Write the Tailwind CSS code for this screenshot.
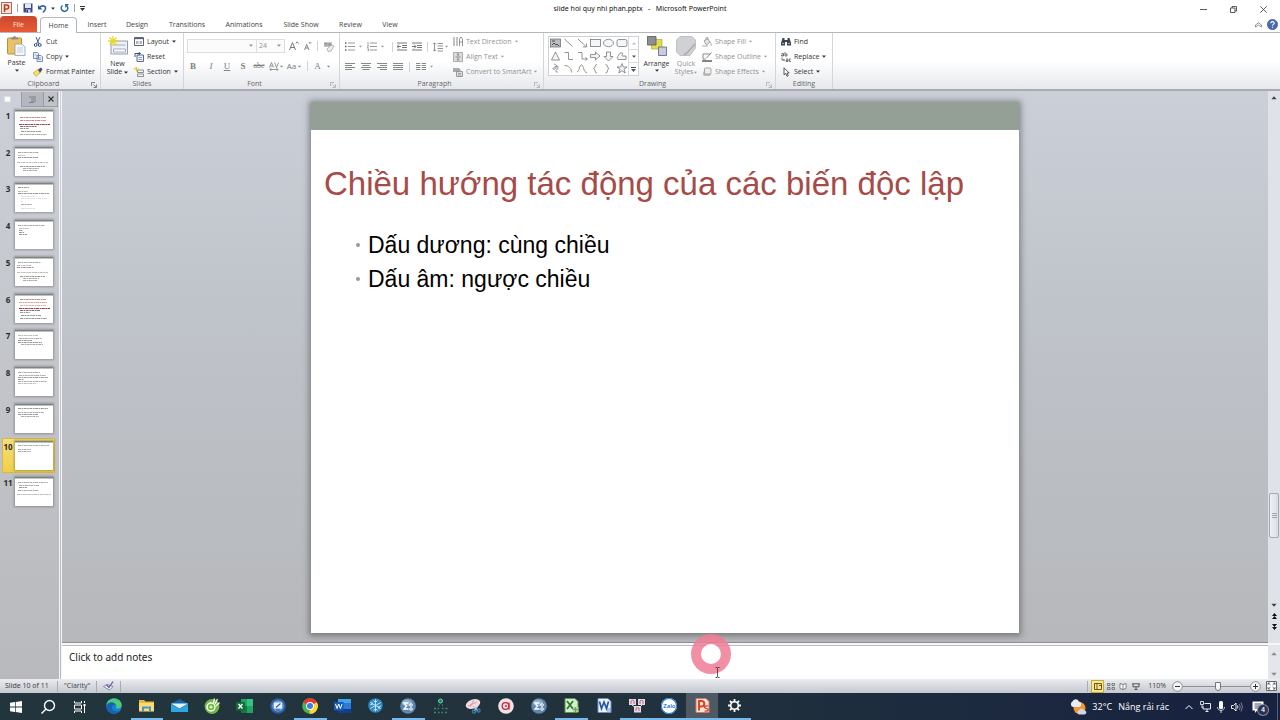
<!DOCTYPE html>
<html lang="vi">
<head>
  <meta charset="UTF-8" />
  <meta name="viewport" content="width=device-width, initial-scale=1" />
  <title>slide hoi quy nhi phan.pptx - Microsoft PowerPoint</title>
  <script src="https://cdn.jsdelivr.net/npm/@tailwindcss/browser@4"></script>
</head>
<body class="h-screen min-h-[600px] flex flex-col overflow-hidden bg-white font-['Open_Sans','Noto_Sans',sans-serif] text-[7px] leading-[10px] text-[#333]">

  <!-- Shared symbols -->
  <svg class="hidden">
    <symbol id="caret" viewBox="0 0 4 3"><path d="M0 .5h4L2 2.800z" fill="currentColor"/></symbol>
    <symbol id="launcher" viewBox="0 0 6 6"><path d="M.5 4V.5H4M2.500 2.500 5 5M5.500 2.500v3h-3" fill="none" stroke="currentColor" stroke-width=".8"/></symbol>
    <symbol id="sigma" viewBox="0 0 16 16">
      <circle cx="8" cy="8" r="7.800" fill="#5f86ad"/><ellipse cx="7" cy="5" rx="5" ry="3.500" fill="#9dbbd6" opacity=".8"/>
      <path d="M8.500 5H4l2.500 3L4 11h4.500" fill="none" stroke="#fff" stroke-width="1.300"/><circle cx="11" cy="7" r="1.300" fill="none" stroke="#fff"/><circle cx="11" cy="11" r="1.300" fill="none" stroke="#fff"/>
    </symbol>
  </svg>

  <!-- Title bar -->
  <header class="h-4 shrink-0 flex items-center relative">
    <div class="flex items-center gap-[5px] pl-px">
      <svg class="w-[11px] h-3" viewBox="0 0 11 12"><rect x=".5" y=".5" width="10" height="11" fill="#fbe9e2" stroke="#b06a55"/><path d="M3.500 10V3h2.200a2 2 0 0 1 0 4H3.500" fill="none" stroke="#c43e1c" stroke-width="1.600"/></svg>
      <span class="w-px h-2 bg-gray-400"></span>
      <button aria-label="Save"><svg class="w-[10px] h-[10px]" viewBox="0 0 10 10"><path d="M.5.500h9v9h-9z" fill="#3d4a86"/><path d="M2 .500h6V5H2z" fill="#e4e9f7"/><path d="M3 6.500h4.500v3H3z" fill="#cdd5ec"/><path d="M3.500 7h1.500v2.500H3.500z" fill="#2b3565"/></svg></button>
      <button aria-label="Undo" class="flex items-center gap-1"><svg class="w-[9px] h-[9px]" viewBox="0 0 9 9"><path d="M1.500 3.500C4 1 8 1.500 7.500 4.500 7.300 6.500 5.500 7.500 5 8.500" fill="none" stroke="#2f5d9f" stroke-width="1.600"/><path d="M0 1v4.500h4.500z" fill="#2f5d9f"/></svg><svg class="w-1 h-[3px]"><use href="#caret"/></svg></button>
      <button aria-label="Redo"><svg class="w-[9px] h-[9px]" viewBox="0 0 9 9"><path d="M2.500 1.500A3.300 3.300 0 1 0 6.500 1.500" fill="none" stroke="#2f6aa8" stroke-width="1.500"/><path d="M5 0h4L5.500 4z" fill="#2f6aa8"/></svg></button>
      <span class="w-px h-2 bg-gray-400"></span>
      <button aria-label="Customize toolbar"><svg class="w-[5px] h-[5px]" viewBox="0 0 5 5"><path d="M0 0h5v1H0zM0 2h5L2.500 5z" fill="#333"/></svg></button>
    </div>
    <div class="absolute inset-0 flex items-center justify-center pt-px font-['Noto_Sans',sans-serif] text-[#111] whitespace-pre pointer-events-none">slide hoi quy nhi phan.pptx   -   Microsoft PowerPoint</div>
    <div class="ml-auto flex items-center gap-[23px] pr-[13px] pt-[2px]">
      <button aria-label="Minimize"><svg class="w-[7px] h-[7px]" viewBox="0 0 7 7"><path d="M0 3.500h7" stroke="#333" stroke-width=".8"/></svg></button>
      <button aria-label="Restore"><svg class="w-[7px] h-[7px]" viewBox="0 0 7 7"><path d="M.5 2h4.500v4.500H.5zM2 2V.500h4.500V5H5" fill="none" stroke="#333" stroke-width=".8"/></svg></button>
      <button aria-label="Close"><svg class="w-[7px] h-[7px]" viewBox="0 0 7 7"><path d="M.3.300l6.400 6.400M6.700.300.300 6.700" stroke="#333" stroke-width=".8"/></svg></button>
    </div>
  </header>

  <!-- Ribbon tabs -->
  <nav class="h-[17px] shrink-0 flex items-end border-b border-[#b4b7bd] text-[#444] *:pt-px">
    <button class="w-[37px] h-4 rounded-t-sm bg-linear-to-b from-[#c9492f] to-[#ea5a33] text-[#ffe6dc]">File</button>
    <button class="w-[37px] h-4 ml-[3px] -mb-px rounded-t-sm border border-b-0 border-[#b4b7bd] bg-white">Home</button>
    <button class="w-10 h-4">Insert</button>
    <button class="w-10 h-4">Design</button>
    <button class="w-[60px] h-4">Transitions</button>
    <button class="w-[54px] h-4">Animations</button>
    <button class="w-[60px] h-4">Slide Show</button>
    <button class="w-[39px] h-4">Review</button>
    <button class="w-10 h-4">View</button>
    <div class="ml-auto flex items-center gap-[5px] pr-[2px] h-4">
      <button aria-label="Minimize ribbon"><svg class="w-[7px] h-[6px]" viewBox="0 0 7 6"><path d="M.5 3 3.500.800 6.500 3v2L3.500 3 .5 5z" fill="#fff" stroke="#666" stroke-width=".7"/></svg></button>
      <button aria-label="Help"><svg class="w-[11px] h-[11px]" viewBox="0 0 11 11"><circle cx="5.500" cy="5.500" r="5.200" fill="#4a6ab0" stroke="#37518d" stroke-width=".5"/><path d="M3.800 4.200c0-2.200 3.500-2.100 3.400 0C7.200 5.400 5.500 5.500 5.500 6.800M5.500 7.800v1" fill="none" stroke="#fff" stroke-width="1.100"/></svg></button>
    </div>
  </nav>

  <!-- Ribbon -->
  <div class="h-[58px] shrink-0 flex bg-linear-to-b from-white from-50% to-[#e6e8ec] border-b-2 border-[#a9abb0] pl-px whitespace-nowrap">

    <section class="w-[100px] flex flex-col border-r border-[#d4d6da]">
      <div class="h-[46px] flex pt-px">
        <button class="w-[31px] flex flex-col items-center pt-[2px]">
          <svg class="w-[19px] h-5" viewBox="0 0 19 20"><rect x=".5" y="2" width="14" height="16" rx="1" fill="#eac263" stroke="#b98f3c"/><path d="M4 3.500V1.500h2a1.500 1.500 0 0 1 3 0h2v2z" fill="#8c8c90"/><path d="M8 8h7l3 3v8.500H8z" fill="#f5f7fb" stroke="#8491b0" stroke-width=".7"/><path d="M10 12h6M10 14h6M10 16h6" stroke="#a9b4cf" stroke-width=".6"/></svg>
          <span class="mt-[2px]">Paste</span><svg class="w-1 h-[3px] mt-px"><use href="#caret"/></svg>
        </button>
        <div class="flex flex-col pl-px">
          <button class="h-[15px] flex items-center gap-[3px]"><svg class="w-[10px] h-[10px]" viewBox="0 0 10 10"><path d="M3 0l3 7M7 0 3.500 7" stroke="#4b5b7b"/><circle cx="2.700" cy="8" r="1.400" fill="none" stroke="#2f4d86"/><circle cx="6.800" cy="8" r="1.400" fill="none" stroke="#2f4d86"/></svg>Cut</button>
          <button class="h-[15px] flex items-center gap-[3px]"><svg class="w-[10px] h-[10px]" viewBox="0 0 10 10"><path d="M.5.500h4l1 1v5h-5zM4 3.500h4l1.500 1.500v4.500H4z" fill="#e9effb" stroke="#5877ac" stroke-width=".8"/><path d="M1.500 3h2M5 6h3M5 7.500h3" stroke="#5877ac" stroke-width=".6"/></svg>Copy<svg class="w-1 h-[3px]"><use href="#caret"/></svg></button>
          <button class="h-[15px] flex items-center gap-[3px]"><svg class="w-[10px] h-[10px]" viewBox="0 0 10 10"><path d="M0 6 5 2.500 7 6 3 9.500z" fill="#f3df62" stroke="#a48e2c" stroke-width=".5"/><path d="M5 2.500 8 .500l1.500 2L7 6z" fill="#48506a"/></svg>Format Painter</button>
        </div>
      </div>
      <footer class="flex-1 flex items-center justify-center relative pr-[14px] text-[#666]">Clipboard<button aria-label="Clipboard options" class="absolute right-[3px] top-[3px]"><svg class="w-[6px] h-[6px]"><use href="#launcher"/></svg></button></footer>
    </section>

    <section class="w-[83px] flex flex-col border-r border-[#d4d6da]">
      <div class="h-[46px] flex pt-px">
        <button class="w-[33px] flex flex-col items-center pt-[2px]">
          <svg class="w-5 h-5" viewBox="0 0 20 20"><rect x="3" y="5" width="16.500" height="13" fill="#eef1f6" stroke="#7b8799" stroke-width=".8"/><path d="M5.500 9h12M5.500 13h12v3h-12z" fill="#fff" stroke="#9aa5b8" stroke-width=".9"/><path d="M5 0v10M0 5h10M1.500 1.500l7 7M8.500 1.500l-7 7" stroke="#e6d928" stroke-width="1.300"/></svg>
          <span class="mt-[3px] leading-[9px]">New</span><span class="flex items-center gap-[2px] leading-[8px]">Slide <svg class="w-1 h-[3px]"><use href="#caret"/></svg></span>
        </button>
        <div class="flex flex-col">
          <button class="h-[15px] flex items-center gap-[3px]"><svg class="w-[10px] h-[9px]" viewBox="0 0 10 9"><path d="M.5.500h9v8h-9z" fill="#fff" stroke="#5d6470"/><path d="M1 1.500h8" stroke="#5d6470" stroke-width="1.300"/><path d="M2 4h2.500v3H2zM5.500 4H8v3H5.500z" fill="#a7b3c9"/></svg>Layout<svg class="w-1 h-[3px]"><use href="#caret"/></svg></button>
          <button class="h-[15px] flex items-center gap-[3px]"><svg class="w-[10px] h-[10px]" viewBox="0 0 10 10"><path d="M3 3h6.500v6.500H3z" fill="#eef2fa" stroke="#5d6b88"/><path d="M1 5V1.500h5M4.500 0 6.500 1.500l-2 1.500" fill="none" stroke="#2e4f95"/><path d="M4.500 5.500H8M4.500 7.500H8" stroke="#7f8ca8" stroke-width=".8"/></svg>Reset</button>
          <button class="h-[15px] flex items-center gap-[3px]"><svg class="w-[10px] h-[10px]" viewBox="0 0 10 10"><path d="M3.500 3h6v2.500h-6zM3.500 7h6v2.500h-6z" fill="#f5f6f8" stroke="#70767f" stroke-width=".8"/><path d="M0 2h5M2.500 0v4.500M.7.300l3.600 3.600" stroke="#dccb24"/></svg>Section<svg class="w-1 h-[3px]"><use href="#caret"/></svg></button>
        </div>
      </div>
      <footer class="flex-1 flex items-center justify-center text-[#666]">Slides</footer>
    </section>

    <section class="w-[156px] flex flex-col border-r border-[#d4d6da] text-[#929292]">
      <div class="h-[46px] flex flex-col pt-[5px] pl-[3px]">
        <div class="flex items-center h-[16px]">
          <span class="relative"><select aria-label="Font" class="block appearance-none w-[70px] h-[14px] border border-[#dcdde0] bg-[#fbfbfb]"><option></option></select><svg class="w-1 h-[3px] absolute right-1 top-[5px]"><use href="#caret"/></svg></span>
          <span class="relative"><select aria-label="Font size" class="block appearance-none w-[28px] h-[14px] border border-l-0 border-[#dcdde0] bg-[#fbfbfb] pl-[2px] leading-[12px]"><option>24</option></select><svg class="w-1 h-[3px] absolute right-1 top-[5px]"><use href="#caret"/></svg></span>
          <button aria-label="Grow font" class="ml-1"><svg class="w-[10px] h-[10px]" viewBox="0 0 10 10"><path d="M.5 9 3.500 1.500 6.500 9M1.500 6.500h4M7 2.500 8.200.800 9.500 2.500" fill="none" stroke="#777"/></svg></button>
          <button aria-label="Shrink font" class="ml-[5px]"><svg class="w-[8px] h-[10px]" viewBox="0 0 8 10"><path d="M.5 9 2.700 3.500 5 9M1.300 7h2.800M5 1l1 1.500L7.200 1" fill="none" stroke="#777" stroke-width=".9"/></svg></button>
          <span class="w-px h-[10px] ml-[5px] bg-[#d0d2d6]"></span>
          <button aria-label="Clear formatting" class="ml-[5px]"><svg class="w-[11px] h-[11px]" viewBox="0 0 11 11"><path d="M1 1h8v5H1z" fill="#c9c9cb"/><path d="M2 5V2.500h2V5M6 2v3h2V3H6" fill="none" stroke="#777" stroke-width=".7"/><path d="M4 8l4-4 3 1-3 5-3 .500z" fill="#eee" stroke="#999" stroke-width=".7"/></svg></button>
        </div>
        <div class="flex items-center h-6 font-['Liberation_Serif',serif] text-[9px] text-[#808080]">
          <button class="w-4 pr-[4px] font-bold text-center">B</button>
          <button class="w-4 italic">I</button>
          <button class="w-4 underline">U</button>
          <button class="w-4 font-bold">S</button>
          <button class="w-4 text-[8px] line-through">abc</button>
          <button class="w-[17px] flex items-center gap-px justify-center text-[7px]"><svg class="w-[10px] h-[9px]" viewBox="0 0 10 9"><path d="M.5 5.500 2.500.500l2 5M1.200 4h2.600M5.500.500l2 5 2-5M1 7.500h8M2.500 6.300.800 7.500l1.700 1.200M7.500 6.300l1.700 1.200-1.700 1.200" fill="none" stroke="currentColor" stroke-width=".8"/></svg><svg class="w-[3px] h-[3px]"><use href="#caret"/></svg></button>
          <button class="w-5 flex items-center gap-[2px] justify-center font-['Open_Sans',sans-serif] text-[8px]">Aa<svg class="w-[3px] h-[3px]"><use href="#caret"/></svg></button>
          <span class="w-px h-[10px] ml-[3px] bg-[#d0d2d6]"></span>
          <button class="w-[28px] flex items-center gap-[6px] justify-center">A<svg class="w-[3px] h-[3px]"><use href="#caret"/></svg></button>
        </div>
      </div>
      <footer class="flex-1 flex items-center justify-center relative pr-[14px] text-[#666]">Font<button aria-label="Font options" class="absolute right-[3px] top-[3px] text-[#aaa]"><svg class="w-[6px] h-[6px]"><use href="#launcher"/></svg></button></footer>
    </section>

    <section class="w-[204px] flex flex-col border-r border-[#d4d6da] text-[#929292]">
      <div class="h-[46px] flex pt-px">
        <div class="w-[113px] flex flex-col pt-1 pl-[5px]">
          <div class="h-[17px] flex items-center">
            <button aria-label="Bullets" class="flex items-center gap-1"><svg class="w-[10px] h-[9px]" viewBox="0 0 10 9"><path d="M0 1h1.500M0 4.500h1.500M0 8h1.500" stroke="#666" stroke-width="1.400"/><path d="M3 1h7M3 4.500h7M3 8h7" stroke="#999"/></svg><svg class="w-[3px] h-[3px]"><use href="#caret"/></svg></button>
            <button aria-label="Numbering" class="flex items-center gap-1 ml-[5px]"><svg class="w-[10px] h-[9px]" viewBox="0 0 10 9"><path d="M1 0v2.500M.3 3.500h1.200L.3 5.500h1.200M.3 6.800h1.200v2H.3" fill="none" stroke="#777" stroke-width=".7"/><path d="M3 1h7M3 4.500h7M3 8h7" stroke="#999"/></svg><svg class="w-[3px] h-[3px]"><use href="#caret"/></svg></button>
            <span class="w-px h-[10px] mx-[4px] ml-[8px] bg-[#d0d2d6]"></span>
            <button aria-label="Decrease indent"><svg class="w-[10px] h-[9px]" viewBox="0 0 10 9"><path d="M0 1h10M5 3.500h5M5 5.500h5M0 8h10M4 4.500H0M2 2.500l-2 2 2 2" fill="none" stroke="#777"/></svg></button>
            <button aria-label="Increase indent" class="ml-[5px]"><svg class="w-[10px] h-[9px]" viewBox="0 0 10 9"><path d="M0 1h10M5 3.500h5M5 5.500h5M0 8h10M0 4.500h4M2 2.500l2 2-2 2" fill="none" stroke="#777"/></svg></button>
            <span class="w-px h-[10px] mx-[5px] bg-[#d0d2d6]"></span>
            <button aria-label="Line spacing" class="flex items-center gap-[2px]"><svg class="w-[10px] h-[10px]" viewBox="0 0 10 10"><path d="M4.500 1.500H10M4.500 4H10M4.500 6.500H10M4.500 9H10M1.500 1v8M0 2.500 1.500.800 3 2.500M0 7.500l1.500 1.700L3 7.500" fill="none" stroke="#888" stroke-width=".9"/></svg><svg class="w-[3px] h-[3px]"><use href="#caret"/></svg></button>
          </div>
          <div class="h-[23px] flex items-center gap-[6px]">
            <button aria-label="Align left"><svg class="w-[10px] h-[9px]" viewBox="0 0 10 9"><path d="M0 1.500h10M0 3.500h7M0 5.500h10M0 7.500h7" stroke="#888"/></svg></button>
            <button aria-label="Center"><svg class="w-[10px] h-[9px]" viewBox="0 0 10 9"><path d="M0 1.500h10M1.500 3.500h7M0 5.500h10M1.500 7.500h7" stroke="#888"/></svg></button>
            <button aria-label="Align right"><svg class="w-[10px] h-[9px]" viewBox="0 0 10 9"><path d="M0 1.500h10M3 3.500h7M0 5.500h10M3 7.500h7" stroke="#888"/></svg></button>
            <button aria-label="Justify"><svg class="w-[10px] h-[9px]" viewBox="0 0 10 9"><path d="M0 1.500h10M0 3.500h10M0 5.500h10M0 7.500h10" stroke="#888"/></svg></button>
            <span class="w-px h-[10px] bg-[#d0d2d6]"></span>
            <button aria-label="Columns" class="flex items-center gap-1"><svg class="w-[10px] h-[9px]" viewBox="0 0 10 9"><path d="M0 1.500h4.300M0 3.500h4.300M0 5.500h4.300M0 7.500h4.300M5.700 1.500H10M5.700 3.500H10M5.700 5.500H10M5.700 7.500H10" stroke="#888"/></svg><svg class="w-[3px] h-[3px]"><use href="#caret"/></svg></button>
          </div>
        </div>
        <div class="flex flex-col">
          <button class="h-[15px] flex items-center gap-[3px]"><svg class="w-[10px] h-[11px]" viewBox="0 0 10 11"><path d="M1 1v9M4 1v9" stroke="#888"/><path d="M6.500 10V3L8 1l1.500 2v7M6.500 6h3" fill="none" stroke="#888" stroke-width=".9"/></svg>Text Direction<svg class="w-[3px] h-[3px]"><use href="#caret"/></svg></button>
          <button class="h-[15px] flex items-center gap-[3px]"><svg class="w-[10px] h-[10px]" viewBox="0 0 10 10"><path d="M.5.500h9v9h-9z" fill="#ddd" stroke="#aaa"/><path d="M2.500 5h5M5 1v2.500M5 6.500V9M4 2.500l1 1 1-1M4 7.500l1-1 1 1" fill="none" stroke="#777" stroke-width=".8"/></svg>Align Text<svg class="w-[3px] h-[3px]"><use href="#caret"/></svg></button>
          <button class="h-[15px] flex items-center gap-[3px]"><svg class="w-[10px] h-[10px]" viewBox="0 0 10 10"><path d="M0 1h6l2 2-2 2H0z" fill="#aaa"/><path d="M3.500 4.500h6v5h-6z" fill="#ddd" stroke="#888" stroke-width=".8"/><path d="M5 6.500h3M5 8h3" stroke="#888" stroke-width=".7"/></svg>Convert to SmartArt<svg class="w-[3px] h-[3px]"><use href="#caret"/></svg></button>
        </div>
      </div>
      <footer class="flex-1 flex items-center justify-center relative pr-[14px] text-[#666]">Paragraph<button aria-label="Paragraph options" class="absolute right-[3px] top-[3px] text-[#aaa]"><svg class="w-[6px] h-[6px]"><use href="#launcher"/></svg></button></footer>
    </section>

    <section class="w-[232px] flex flex-col border-r border-[#d4d6da]">
      <div class="h-[46px] flex pt-px">
        <div class="w-[91px] h-10 mt-[2px] ml-1 flex border border-[#cfd1d5] bg-white text-[#555]">
          <svg class="w-[79px] h-[38px]" viewBox="0 0 79 38" fill="none" stroke="#666" stroke-width=".7">
            <rect x="1.500" y="2" width="10" height="8" fill="#b9bcc2"/><path d="M3 4h3M3 8l2-2 2 2 1-1 2 2" stroke="#222"/>
            <path d="M15.500 2l8 7.500M29 2l8 7.500M37.500 6.500V10H34"/>
            <rect x="41.500" y="2.500" width="10" height="7" fill="#f4f6fa"/><ellipse cx="59.500" cy="6" rx="5" ry="3.700" fill="#f4f6fa"/><rect x="68" y="2.500" width="10" height="7" rx="1.800" fill="#f4f6fa"/>
            <path d="M6.500 15 2.500 23h8z" fill="#f4f6fa"/><path d="M15.500 15.500h4v7h4.500M29 15.500h4v6.500h5M36.500 20.500l2 1.500-2 1.500"/>
            <path d="M41.500 17.500h5V15l4.500 4-4.500 4v-2.500h-5z" fill="#f4f6fa"/><path d="M57.500 15h4v4.500H64L59.500 24 55 19.500h2.500z" fill="#f4f6fa"/>
            <path d="M69 22.500c-2-2 .500-3.500 1-5 1-2.500 4-2 4-.500-1 1-2 2 0 2h3v3.500z" fill="#f4f6fa"/>
            <path d="M5 27c3 1 3 2 1 3s-3 2-1 2.500c3-2.500 5-2 3 0s-1 3 1 2.500M6 30c2-1 4-1 3 .500"/><path d="M15.500 28.500c4 0 7 3 7 7M28 35c3-1 2-7 4.500-7S34 35.500 38 35.500"/>
            <path d="M48 27.500c-3 0-1 3.500-3.500 4 2.500.500.500 4.500 3.500 4.500M56.500 27.500c3 0 1 3.500 3.500 4-2.500.500-.5 4.500-3.500 4.500"/>
            <path d="M73 26.500l1.300 3.500h3.700l-3 2.200 1.200 3.800-3.200-2.300-3.200 2.300 1.200-3.800-3-2.200h3.700z" fill="#f4f6fa"/>
          </svg>
          <div class="flex-1 flex flex-col divide-y divide-[#d8dade] border-l border-[#d8dade]">
            <button aria-label="Scroll shapes up" class="flex-1 grid place-items-center text-[#bbb]"><svg class="w-1 h-[3px] rotate-180"><use href="#caret"/></svg></button>
            <button aria-label="Scroll shapes down" class="flex-1 grid place-items-center"><svg class="w-1 h-[3px]"><use href="#caret"/></svg></button>
            <button aria-label="More shapes" class="flex-1 grid place-items-center"><svg class="w-[5px] h-[5px]" viewBox="0 0 5 5"><path d="M0 0h5v1H0zM0 2h5L2.500 5z" fill="#555"/></svg></button>
          </div>
        </div>
        <button class="w-[35px] flex flex-col items-center pt-[2px]">
          <svg class="w-5 h-5" viewBox="0 0 20 20"><path d="M4.500 3.500H15V13H4.500z" fill="#e3dd4a" stroke="#b0a836" stroke-width=".7"/><path d="M.5.500H9v8.500H.5z" fill="#8e8f92" stroke="#55575c" stroke-width=".8"/><path d="M11.500 11h8v8.500h-8z" fill="#c9cce0" stroke="#5c6080" stroke-width=".8"/></svg>
          <span class="mt-[3px]">Arrange</span><svg class="w-1 h-[3px]"><use href="#caret"/></svg>
        </button>
        <button class="w-6 flex flex-col items-center pt-[2px] text-[#929292]">
          <svg class="w-5 h-5" viewBox="0 0 20 20"><path d="M4 .500h12L19.500 4v8L14 19.500H4L.5 16V4z" fill="#cfd1d4" stroke="#bfc1c5"/><path d="M19 8l-8 9-3 2" fill="none" stroke="#a9abaf" stroke-width="1.600"/></svg>
          <span class="mt-[3px] leading-[9px]">Quick</span><span class="flex items-center gap-px leading-[8px]">Styles <svg class="w-[3px] h-[3px]"><use href="#caret"/></svg></span>
        </button>
        <div class="flex flex-col pl-1 text-[#929292]">
          <button class="h-[15px] flex items-center gap-[3px]"><svg class="w-[10px] h-[10px]" viewBox="0 0 10 10"><path d="M2 4l3.500-2.500L8 5 4.500 8z" fill="#e6e6e6" stroke="#888" stroke-width=".8"/><path d="M4 3V1a1 1 0 0 1 2 0v2M8 5c1 1 1.500 2 1 4M0 9h6" fill="none" stroke="#999" stroke-width=".8"/></svg>Shape Fill<svg class="w-[3px] h-[3px]"><use href="#caret"/></svg></button>
          <button class="h-[15px] flex items-center gap-[3px]"><svg class="w-[10px] h-[10px]" viewBox="0 0 10 10"><path d="M8 2H1v5h3M9.500.500 4.500 6" fill="none" stroke="#888"/><path d="M0 9h10" stroke="#777" stroke-width="1.800"/></svg>Shape Outline<svg class="w-[3px] h-[3px]"><use href="#caret"/></svg></button>
          <button class="h-[15px] flex items-center gap-[3px]"><svg class="w-[10px] h-[10px]" viewBox="0 0 10 10"><rect x="1" y="4" width="8" height="5" rx="2" fill="#bbb"/><rect x="2.500" y="1" width="6.500" height="6" rx="1" fill="#eee" stroke="#999" stroke-width=".8"/></svg>Shape Effects<svg class="w-[3px] h-[3px]"><use href="#caret"/></svg></button>
        </div>
      </div>
      <footer class="flex-1 flex items-center justify-center relative pr-[14px] text-[#666]">Drawing<button aria-label="Drawing options" class="absolute right-[3px] top-[3px] text-[#aaa]"><svg class="w-[6px] h-[6px]"><use href="#launcher"/></svg></button></footer>
    </section>

    <section class="w-[57px] flex flex-col border-r border-[#d4d6da]">
      <div class="h-[46px] flex flex-col pt-px pl-[5px]">
        <button class="h-[15px] flex items-center gap-[3px]"><svg class="w-[10px] h-[9px]" viewBox="0 0 10 9"><path d="M1.500 1h2v2h3V1h2l1.500 5v2.500H6V5H4v3.500H0V6z" fill="#3c4453"/><path d="M1 6.500h2M7 6.500h2" stroke="#aab3c5"/></svg>Find</button>
        <button class="h-[15px] flex items-center gap-[3px]"><svg class="w-[10px] h-[10px]" viewBox="0 0 10 10"><path d="M.5 1.500h2V4h-2V3h2M4 0v4h2V2H4M5 7h2v2.500H5V8.300h2M10 7H8.500v2.500H10M1 5.500V8h2.500M2.500 7l1 1-1 1" fill="none" stroke="#555" stroke-width=".8"/></svg>Replace<svg class="w-1 h-[3px]"><use href="#caret"/></svg></button>
        <button class="h-[15px] flex items-center gap-[3px]"><svg class="w-[10px] h-[10px]" viewBox="0 0 10 10"><path d="M3 .800v7l1.700-1.500L6 9.300l1.200-.6L6 6h2.200z" fill="#fff" stroke="#333" stroke-width=".8"/></svg>Select<svg class="w-1 h-[3px]"><use href="#caret"/></svg></button>
      </div>
      <footer class="flex-1 flex items-center justify-center text-[#666]">Editing</footer>
    </section>
  </div>

  <!-- Work area -->
  <main class="flex-1 min-h-0 flex bg-linear-to-b from-[#cdd0d8] to-[#b7b9bc]">
    <aside class="w-[59px] shrink-0 flex flex-col">
      <div class="h-4 flex pt-px pr-px shrink-0">
        <button aria-label="Slides" class="w-[21px] pl-1"><svg class="w-[7px] h-[7px]" viewBox="0 0 7 7"><rect x=".5" y=".5" width="6" height="5.500" fill="#fff" stroke="#dcdcdc"/></svg></button>
        <button aria-label="Outline" class="w-[23px] grid place-items-center border border-t-0 border-[#9a9ca3] bg-[#b4b7be]"><svg class="w-[7px] h-[7px]" viewBox="0 0 7 7"><path d="M0 1h7M2 3h5M2 5h5M0 6.500h5" stroke="#777b85" stroke-width=".9"/></svg></button>
        <button aria-label="Close pane" class="w-[14px] grid place-items-center border-b border-r border-[#9a9ca3] bg-[#bfc2c9]"><svg class="w-[6px] h-[6px]" viewBox="0 0 6 6"><path d="M.5.500l5 5M5.500.500l-5 5" stroke="#333" stroke-width="1.200"/></svg></button>
      </div>
      <ol id="slideList" class="grid grid-rows-11 h-[404px] pl-[2px] pr-1 font-bold text-[8px] text-[#2c2c2c]"></ol>
    </aside>

    <div class="flex-1 min-w-0 flex flex-col border-l-[3px] border-double border-[#f3f4f7]">
      <div class="flex-1 min-h-0 flex">
        <div class="flex-1 flex justify-center items-start pt-[11px] bg-linear-to-b from-[#cbcfd7] via-[#bfc3ca] via-40% to-[#b6b8bb] border-b border-[#8e9094]">
          <article class="h-[531px] aspect-4/3 min-w-0 bg-white shadow-[0_1px_6px_2px_rgba(60,60,60,0.5)] font-['Liberation_Sans',sans-serif]">
            <div class="h-7 bg-[#94a096]"></div>
            <h1 class="mt-8 pl-[13px] text-[33px] leading-[44px] text-[#a64b47] whitespace-nowrap">Chiều hướng tác động của các biến độc lập</h1>
            <ul class="mt-[22px] pl-[45px] text-[23px] leading-[34px] text-black">
              <li class="flex items-center gap-[8px]"><span class="w-1 h-1 rounded-full bg-[#999]"></span>Dấu dương: cùng chiều</li>
              <li class="flex items-center gap-[8px]"><span class="w-1 h-1 rounded-full bg-[#999]"></span>Dấu âm: ngược chiều</li>
            </ul>
          </article>
        </div>
        <div class="w-3 flex flex-col items-center bg-[#dfe2e8] text-[#444]">
          <button aria-label="Scroll up" class="h-[13px] grid place-items-center"><svg class="w-[6px] h-1 rotate-180"><use href="#caret"/></svg></button>
          <div class="flex-1 w-full flex flex-col justify-end px-px pb-[61px]">
            <div class="h-[45px] rounded-xs border border-[#a3a8b2] bg-linear-to-r from-[#eef1f6] to-[#d9dce3] grid place-items-center"><svg class="w-[5px] h-[5px]" viewBox="0 0 5 5"><path d="M0 .500h5M0 2.500h5M0 4.500h5" stroke="#888" stroke-width=".7"/></svg></div>
          </div>
          <button aria-label="Scroll down" class="h-[11px] grid place-items-center"><svg class="w-[6px] h-1"><use href="#caret"/></svg></button>
          <button aria-label="Previous slide" class="h-[11px] grid place-items-center"><svg class="w-[5px] h-[6px]" viewBox="0 0 5 6"><path d="M0 3 2.500 0 5 3zM0 6l2.500-3L5 6z" fill="#111"/></svg></button>
          <button aria-label="Next slide" class="h-[11px] mb-[11px] grid place-items-center"><svg class="w-[5px] h-[6px]" viewBox="0 0 5 6"><path d="M0 0h5L2.500 3zM0 3h5L2.500 6z" fill="#111"/></svg></button>
        </div>
      </div>

      <!-- Notes -->
      <div class="h-9 shrink-0 relative flex bg-white border-t-2 border-t-[#f7f7f8]">
        <textarea aria-label="Notes" placeholder="Click to add notes" class="flex-1 resize-none border-t border-[#b9bbbf] pl-[7px] pt-1 font-['Noto_Sans',sans-serif] text-[10px] leading-[14px] placeholder:text-[#222] outline-none"></textarea>
        <div class="w-3 flex flex-col justify-between items-center pt-[7px] pb-[3px] bg-[#e4e6eb] text-[#888]">
          <svg class="w-[6px] h-1 rotate-180"><use href="#caret"/></svg>
          <svg class="w-[6px] h-1"><use href="#caret"/></svg>
        </div>
        <!-- Click highlight and text pointer -->
        <div class="absolute left-[629px] -top-[11px] w-10 h-10 rounded-full border-[10px] border-[#ee7c95]/85 bg-white bg-clip-padding"></div>
        <svg class="absolute left-[653px] top-[22px] w-[5px] h-[11px]" viewBox="0 0 5 11"><path d="M.5.500h1.500L2.500 1 3 .500h1.500M2.500 1v9M.5 10.500h1.500l.5-.5.5.500h1.500" fill="none" stroke="#333" stroke-width=".8"/></svg>
      </div>
    </div>
  </main>

  <!-- Status bar -->
  <footer class="h-[14px] shrink-0 flex items-center pl-[5px] bg-linear-to-b from-[#ebecef] to-[#c4c8d0] text-[#444]">
    <span class="w-[52px] font-['Noto_Sans',sans-serif]">Slide 10 of 11</span>
    <span class="w-10 h-[11px] border-x border-[#a8abb2] pl-[6px]">"Clarity"</span>
    <button aria-label="Spelling" class="w-6 h-[11px] border-r border-[#a8abb2] grid place-items-center"><svg class="w-[11px] h-[10px]" viewBox="0 0 11 10"><path d="M.5 5.500 4 3.500l6 2-3.500 3.500z" fill="#fff" stroke="#546a9c" stroke-width=".8"/><path d="M3.500 4 6 6.500 10 .500" fill="none" stroke="#6a5aa0" stroke-width="1.300"/></svg></button>
    <div class="ml-auto flex items-center pr-[3px]">
      <span class="w-px h-[11px] bg-[#a8abb2] mr-[3px]"></span>
      <button aria-label="Normal view" class="w-[13px] h-[13px] grid place-items-center border border-[#c9a83c] bg-[#fbe88e]"><svg class="w-2 h-[7px]" viewBox="0 0 8 7"><path d="M.5.500h7v6h-7zM3 .500v6M5 2.500h2.500" fill="none" stroke="#6b5a20"/></svg></button>
      <button aria-label="Slide sorter" class="ml-[3px]"><svg class="w-[8px] h-[7px]" viewBox="0 0 8 7"><path d="M.5.500h2.500v2H.5zM5 .500h2.500v2H5zM.5 4.500h2.500v2H.5zM5 4.500h2.500v2H5z" fill="none" stroke="#666" stroke-width=".8"/></svg></button>
      <button aria-label="Reading view" class="ml-1"><svg class="w-[8px] h-[7px]" viewBox="0 0 8 7"><path d="M4 1.500 1 .500v5l3 1 3-1v-5zM4 1.500v5" fill="#fff" stroke="#666" stroke-width=".8"/></svg></button>
      <button aria-label="Slide show" class="ml-[5px]"><svg class="w-[8px] h-[7px]" viewBox="0 0 8 7"><path d="M0 .800h8M1 1v2.800h6V1M4 4v2M2.500 6.500h3" fill="none" stroke="#555"/></svg></button>
      <span class="ml-2">110%</span>
      <button aria-label="Zoom out" class="ml-[6px]"><svg class="w-[11px] h-[11px]" viewBox="0 0 11 11"><circle cx="5.500" cy="5.500" r="4.800" fill="#f4f5f7" stroke="#777" stroke-width=".8"/><path d="M3 5.500h5" stroke="#333"/></svg></button>
      <span class="relative flex items-center w-[67px] h-[11px]">
        <span class="absolute inset-x-0 top-[5px] h-px bg-[#8c8f96]"></span>
        <input type="range" aria-label="Zoom" min="0" max="100" value="52" class="relative appearance-none bg-transparent w-full h-[11px] [&::-webkit-slider-thumb]:appearance-none [&::-webkit-slider-thumb]:w-[6px] [&::-webkit-slider-thumb]:h-[9px] [&::-webkit-slider-thumb]:bg-[#f4f5f7] [&::-webkit-slider-thumb]:border [&::-webkit-slider-thumb]:border-[#777] [&::-webkit-slider-thumb]:rounded-b-[3px]" />
      </span>
      <button aria-label="Zoom in"><svg class="w-[11px] h-[11px]" viewBox="0 0 11 11"><circle cx="5.500" cy="5.500" r="4.800" fill="#f4f5f7" stroke="#777" stroke-width=".8"/><path d="M3 5.500h5M5.500 3v5" stroke="#333"/></svg></button>
      <button aria-label="Fit to window" class="ml-[5px]"><svg class="w-[11px] h-[10px]" viewBox="0 0 11 10"><path d="M.5.500h10v9H.5z" fill="#fff" stroke="#666"/><path d="M2 2l2.500 2M9 2 6.500 4M2 8l2.500-2M9 8 6.500 6M2 4V2h2M9 4V2H7M2 6v2h2M9 6v2H7" fill="none" stroke="#555" stroke-width=".8"/></svg></button>
    </div>
  </footer>

  <!-- Windows taskbar -->
  <footer class="h-[27px] shrink-0 flex bg-linear-to-r from-[#22353c] via-[#21313d] via-55% to-[#172140] text-white">
    <div class="grid grid-cols-3 w-[98px] pr-[2px] place-items-center">
      <button aria-label="Start"><svg class="w-3 h-3" viewBox="0 0 12 12"><path d="M0 1.800 5 1v4.600H0zM5.700.900 12 0v5.600H5.700zM0 6.400h5V11l-5-.8zM5.700 6.400H12V12l-6.300-.9z" fill="#fff"/></svg></button>
      <button aria-label="Search"><svg class="w-4 h-4" viewBox="0 0 16 16"><circle cx="9.500" cy="6.500" r="5" fill="none" stroke="#fff" stroke-width="1.400"/><path d="M6 10l-4.500 4.500" stroke="#fff" stroke-width="1.500"/></svg></button>
      <button aria-label="Task view"><svg class="w-3 h-3" viewBox="0 0 12 12"><path d="M.5 0v2h7V0M.5 4h7v4h-7zM.5 12v-2h7v2M10.500 0v2M10.500 5v7" fill="none" stroke="#fff"/><path d="M9.500 3h2v2h-2z" fill="#fff"/></svg></button>
    </div>
    <div class="grid grid-cols-20 w-[653px] *:grid *:place-items-center *:border-b-2 *:border-transparent *:bg-clip-padding">
      <button aria-label="Edge"><svg class="w-4 h-4" viewBox="0 0 16 16"><circle cx="8" cy="8" r="7.800" fill="#1c7fd0"/><path d="M.5 7C1-1.500 15-2 15.700 7c0 3-3 4.500-6 3 2-2 0-5-3-5-2.500 0-5 .500-6.200 2z" fill="#4ccb7a"/><path d="M1 7C3 3 9 4 9.500 7 7.500 6 5.500 8 6 10.500c.5 2.500 4 4 8 2.500C9 18.500 0 15 1 7z" fill="#1463b0"/></svg></button>
      <button aria-label="File Explorer" class="border-[#76b9ed]!"><svg class="w-[15px] h-[13px]" viewBox="0 0 15 13"><path d="M0 1h5l1.500 1.500H15V12H0z" fill="#e9b73b"/><path d="M0 4h15v8.500H0z" fill="#fbdc73"/><path d="M3 7.500h9v5h-2v-3H5v3H3z" fill="#4c96cf"/></svg></button>
      <button aria-label="Mail"><svg class="w-[17px] h-[13px]" viewBox="0 0 17 13"><path d="M0 4.500 8.500 0 17 4.500V13H0z" fill="#1566a8"/><path d="M0 4.500h17l-8.500 5z" fill="#e5f4fc"/><path d="M0 5l8.500 5L17 5v8H0z" fill="#2fa6e4"/></svg></button>
      <button aria-label="Coc Coc"><svg class="w-4 h-4" viewBox="0 0 16 16"><circle cx="8" cy="8.500" r="7.400" fill="#72b843"/><circle cx="7" cy="9" r="4" fill="none" stroke="#fff" stroke-width="1.400"/><circle cx="7" cy="9" r="1.600" fill="#dff0cf"/><path d="M9.500 5 10.500.500M11 6l2.500-5M12 8l3.500-3.500" stroke="#eef8e3" stroke-width="1.400"/></svg></button>
      <button aria-label="Excel"><svg class="w-[17px] h-4" viewBox="0 0 17 16"><path d="M5 1h12v14H5z" fill="#21a366"/><path d="M11 1h6v7h-6z" fill="#33c481"/><path d="M5 8h6v7H5z" fill="#107c41"/><path d="M0 4h9v8.500H0z" fill="#0f6e3a"/><path d="M2.500 6l4 4.500M6.500 6l-4 4.500" stroke="#fff" stroke-width="1.300"/></svg></button>
      <button aria-label="Remote desktop"><svg class="w-4 h-4" viewBox="0 0 16 16"><circle cx="8" cy="8" r="7.800" fill="#2d5fa5"/><circle cx="8" cy="8" r="5.800" fill="#6e9cd6"/><path d="M4 4.500h8v6H4z" fill="#eaf2fb"/><path d="M6 9.500l4.500-4M6 12h4" stroke="#2d5fa5" stroke-width="1.200"/></svg></button>
      <button aria-label="Chrome" class="border-[#76b9ed]!"><svg class="w-4 h-4" viewBox="0 0 16 16"><circle cx="8" cy="8" r="7.800" fill="#4caf50"/><path d="M8 8 1.200 4.200A7.800 7.800 0 0 1 14.900 4.200z" fill="#e53935"/><path d="M8 8l6.900-3.800A7.800 7.800 0 0 1 7.500 15.800z" fill="#fdd835"/><circle cx="8" cy="8" r="3.900" fill="#fff"/><circle cx="8" cy="8" r="3" fill="#3f7de8"/></svg></button>
      <button aria-label="Word"><svg class="w-[17px] h-4" viewBox="0 0 17 16"><path d="M4 1h13v14H4z" fill="#2b7cd3"/><path d="M4 1h13v4H4z" fill="#41a5ee"/><path d="M4 11h13v4H4z" fill="#103f91"/><path d="M0 4h9.500v8.500H0z" fill="#185abd"/><path d="M1.500 6l1.500 4.500L4.700 6l1.700 4.500L8 6" fill="none" stroke="#fff"/></svg></button>
      <button aria-label="Snowflake"><svg class="w-[15px] h-[15px]" viewBox="0 0 15 15"><circle cx="7.500" cy="7.500" r="7.300" fill="#2c87c2"/><path d="M7.500 1.500v12M2.300 4.500l10.400 6M12.700 4.500 2.300 10.500M5.500 2.500l2 2 2-2M5.500 12.500l2-2 2 2M2 7l2.500-.7L4 4M13 8l-2.500.700.5 2.300" fill="none" stroke="#c3e5f6" stroke-width="1"/></svg></button>
      <button aria-label="SPSS" class="border-[#76b9ed]!"><svg class="w-4 h-4"><use href="#sigma"/></svg></button>
      <button aria-label="SmartPLS"><svg class="w-[15px] h-4" viewBox="0 0 15 16"><circle cx="7.500" cy="3" r="2" fill="#22805d" stroke="#53e3ae"/><path d="M5.500 7h1M9 7h1M1 10.500h2M4.500 10.500h1.500M9 10.500h1.500M12.500 10.500h2M1 14.500h2M5 14.500h1.500M8.500 14.500H10M12 14.500h2" stroke="#36906d" stroke-width="1.400"/></svg></button>
      <button aria-label="Snipping Tool"><svg class="w-4 h-4" viewBox="0 0 16 16"><ellipse cx="8" cy="6" rx="7.500" ry="4.500" transform="rotate(-20 8 6)" fill="#f2dce2"/><path d="M3 8l9-4M5 9l4-7" stroke="#c88a9a" stroke-width=".8"/><path d="M8 8l5 5M13 8l-4 5" stroke="#c5cdd4" stroke-width="1.200"/><circle cx="9" cy="13.500" r="1.600" fill="none" stroke="#3b7db5" stroke-width="1.300"/><circle cx="13.500" cy="12.500" r="1.600" fill="none" stroke="#3b7db5" stroke-width="1.300"/></svg></button>
      <button aria-label="Reader"><svg class="w-4 h-4" viewBox="0 0 16 16"><circle cx="8" cy="8" r="7.800" fill="#eee4e6"/><circle cx="7.500" cy="8" r="3.300" fill="none" stroke="#cf2536" stroke-width="1.300"/><path d="M11 4.500v7M7 8h2" fill="none" stroke="#cf2536" stroke-width="1.300"/></svg></button>
      <button aria-label="SPSS viewer"><svg class="w-4 h-4"><use href="#sigma"/></svg></button>
      <button aria-label="Excel 2010" class="border-[#76b9ed]!"><svg class="w-[15px] h-[15px]" viewBox="0 0 15 15"><path d="M1 .500h10l3 3v11H1z" fill="#d8edcf" stroke="#58964b"/><path d="M3 3l6 8M9 3l-6 8" stroke="#2e7c32" stroke-width="1.800"/><path d="M9 9h5.500v5H9z" fill="#a8d695"/><path d="M9 11.500h5M11.500 9v5" stroke="#4f9147" stroke-width=".7"/></svg></button>
      <button aria-label="Word 2010"><svg class="w-[15px] h-[15px]" viewBox="0 0 15 15"><path d="M1 .500h10l3 3v11H1z" fill="#edf3fb" stroke="#6b8fc4"/><path d="M2.500 3.500 4.500 10.500 7 4l2.500 6.500L11.500 3.500" fill="none" stroke="#2555a0" stroke-width="1.700"/><path d="M10 11h4M10 13h4" stroke="#5c86c4" stroke-width=".8"/></svg></button>
      <button aria-label="AMOS" class="border-[#76b9ed]!"><svg class="w-4 h-[15px]" viewBox="0 0 16 15"><path d="M0 1h7v6H0zM9 1h7v6H9zM5 8h7v6.500H5z" fill="#ead9e2"/><path d="M2 6V3l1.500-1L5 3v3M11 6V3l1.500-1L14 3v3M7 13v-3h3v3" fill="none" stroke="#b0607a" stroke-width=".9"/><path d="M3 7l4 3M13 7l-3 3" stroke="#ddd"/></svg></button>
      <button aria-label="Zalo" class="border-[#76b9ed]!"><span class="w-4 h-4 rounded-full bg-white ring-1 ring-[#1c78d8] ring-inset text-[#1463c2] text-[6px] leading-4 font-semibold">Zalo</span></button>
      <button aria-label="PowerPoint" class="bg-white/20 border-[#76b9ed]!"><svg class="w-[15px] h-[15px]" viewBox="0 0 15 15"><path d="M1 .500h10l3 3v11H1z" fill="#fbe5dc" stroke="#d9755a"/><path d="M4 12.500V3h2.500a2.500 2.500 0 0 1 0 5.500H4" fill="none" stroke="#d24726" stroke-width="2"/><path d="M13.500 8c-5-.5-5 2-2 2.500s2 3-2 2.500" fill="none" stroke="#c8401f" stroke-width="1.200"/></svg></button>
      <button aria-label="Settings" class="border-[#76b9ed]!"><svg class="w-[13px] h-[13px]" viewBox="0 0 13 13"><circle cx="6.500" cy="6.500" r="3.800" fill="none" stroke="#fff" stroke-width="1.600"/><path d="M6.500 0v2.500M6.500 10.500V13M0 6.500h2.500M10.500 6.500H13M1.900 1.900l1.800 1.800M9.300 9.300l1.800 1.800M11.100 1.900 9.300 3.700M3.700 9.300l-1.800 1.800" stroke="#fff" stroke-width="1.800"/></svg></button>
    </div>
    <div class="ml-auto flex items-center border-r border-[#55607a] mr-[2px] pr-[9px]">
      <button class="flex items-center text-[9px] leading-3">
        <svg class="w-[17px] h-4 mr-[5px]" viewBox="0 0 17 16"><circle cx="9.500" cy="9" r="6" fill="#f2952c"/><path d="M3 8a3 3 0 0 1-.5-5.500C4-.5 8-.3 8.700 2.500 12 2.500 12 7.500 9 8z" fill="#e6edf7"/><path d="M9 15.500a2.300 2.300 0 0 1 .5-4.500c1-2 4-1.500 4.500.300 3 0 3 4.200.5 4.200z" fill="#cbd8ea"/></svg>
        <span class="mr-[6px]">32°C</span><span>Nắng rải rác</span>
      </button>
      <button aria-label="Show hidden icons" class="ml-4"><svg class="w-2 h-[6px]" viewBox="0 0 8 6"><path d="M.5 5 4 1.500 7.500 5" fill="none" stroke="#fff"/></svg></button>
      <button aria-label="Network" class="ml-[7px]"><svg class="w-[11px] h-[11px]" viewBox="0 0 11 11"><path d="M4.500 2.500H10.500V8H3V5M5.500 10.500h3M7 8v2" fill="none" stroke="#fff" stroke-width=".9"/><path d="M.5.500h3v3h-3zM2 3.500V7" fill="none" stroke="#fff" stroke-width=".8"/></svg></button>
      <button aria-label="Microphone" class="ml-[6px]"><svg class="w-2 h-3" viewBox="0 0 8 12"><rect x="2" y="0" width="4" height="8" rx="1.500" fill="#fff"/><path d="M.5 6c0 4.500 7 4.500 7 0M4 9v3" fill="none" stroke="#fff" stroke-width=".8"/></svg></button>
      <button aria-label="Volume" class="ml-[6px]"><svg class="w-3 h-[10px]" viewBox="0 0 12 10"><path d="M.5 3.500h2L5 1v8L2.500 6.500h-2zM6.500 3.500q1 1.500 0 3" fill="none" stroke="#fff" stroke-width=".9"/><path d="M8.300 2q2 3 0 6M10 .500q3 4.500 0 9" fill="none" stroke="#8d95a8" stroke-width=".8"/></svg></button>
      <button aria-label="Notifications" class="relative ml-[9px] w-4 h-4"><svg class="w-3 h-3" viewBox="0 0 12 12"><path d="M.5.500h11v9H5L3 12V9.500H.5z" fill="#fff"/><path d="M2.500 3h7M2.500 5h7M2.500 7h5" stroke="#1a2340" stroke-width=".8"/></svg><span class="absolute right-0 bottom-0 w-[10px] h-[10px] rounded-full bg-[#2b3350] ring-1 ring-[#8890a5] text-[7px] leading-[10px] font-semibold">4</span></button>
    </div>
  </footer>

  <script>
    // Text lines of each thumbnail: [left, top, width, colour]
    const slides = [
      [[5,7,26,'#c48a8a'],[5,10,26,'#c48a8a'],[4,14,31,'#a33a44'],[5,16,17,'#777'],[5,18,9,'#999'],[6,21,20,'#999'],[5,24,27,'#aaa']],
      [[3,5,21,'#aaa'],[3,8,7,'#bbb'],[3,10,20,'#999'],[2,15,31,'#bbb'],[5,19,25,'#999'],[8,21,16,'#aaa'],[8,23,14,'#aaa']],
      [[3,4,11,'#999'],[3,8,10,'#bbb'],[3,10,31,'#999'],[6,13,14,'#ddd'],[6,15,26,'#ddd'],[6,18,2,'#ddd'],[6,21,11,'#aaa'],[6,25,14,'#ddd']],
      [[3,5,27,'#aaa'],[4,8,10,'#bbb'],[4,10,4,'#999'],[4,12,5,'#999'],[4,14,8,'#999']],
      [[3,5,23,'#aaa'],[2,8,14,'#bbb'],[2,10,17,'#999'],[2,15,31,'#bbb'],[5,19,25,'#999'],[8,21,16,'#aaa'],[8,23,14,'#aaa']],
      [[5,5,26,'#c48a8a'],[4,8,28,'#d8a595'],[5,11,26,'#dbb5a8'],[4,14,31,'#a33a44'],[5,16,20,'#777'],[5,18,10,'#999'],[6,21,20,'#999'],[5,24,27,'#999']],
      [[3,5,20,'#bbb'],[4,8,23,'#aaa'],[3,10,14,'#999'],[3,12,24,'#999'],[6,14,22,'#aaa']],
      [[3,5,22,'#aaa'],[4,8,27,'#aaa'],[3,10,30,'#999'],[3,12,6,'#999'],[3,14,29,'#aaa'],[3,16,18,'#bbb']],
      [[3,4,30,'#999'],[3,8,26,'#aaa'],[3,10,20,'#999'],[6,12,18,'#aaa']],
      [[3,4,31,'#aaa'],[3,8,13,'#aaa'],[3,10,13,'#aaa']],
      [[3,5,30,'#aaa'],[4,8,20,'#aaa'],[4,10,8,'#999'],[3,13,21,'#aaa'],[2,17,34,'#bbb']]
    ];
    const current = 10;
    const slideList = document.getElementById('slideList');

    slides.forEach((lines, i) => {
      const li = document.createElement('li');
      const active = i + 1 === current;
      li.className = active
        ? 'h-[35px] flex pt-[2px] bg-linear-to-b from-[#f5dd7a] to-[#f0cf45] border border-[#d8b93c]'
        : 'h-[35px] flex pt-[2px] border border-transparent';
      const bars = lines.map(([x, y, w, c]) =>
        `<path d="M${x} ${y + .5}h${w}" stroke="${c}" stroke-width="1" stroke-dasharray="3 .6 1.600 .5"/>`).join('');
      li.innerHTML = `<span class="w-3 shrink-0 text-center -ml-px pt-px">${i + 1}</span>
        <svg class="w-[38px] h-[29px] ml-px bg-white shadow-[0_0_2px_1px_rgba(70,70,70,0.4)]" viewBox="0 0 38 29"><rect width="38" height="29" fill="#fff"/><rect width="38" height="1.500" fill="#7c857e"/>${bars}</svg>`;
      slideList.appendChild(li);
    });
  </script>
</body>
</html>
